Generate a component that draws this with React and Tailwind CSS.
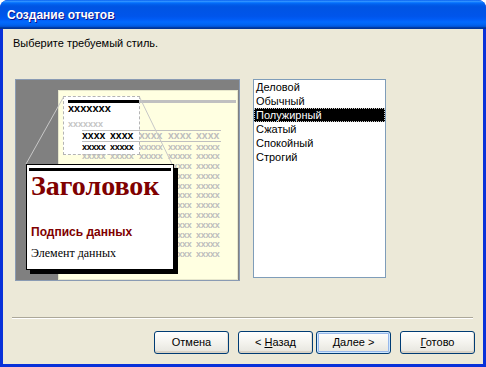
import React from 'react';

const sans = "font-['Liberation_Sans',Arial,sans-serif]";
const serif = "font-['Liberation_Serif','Times_New_Roman',serif]";

const styles = ['Деловой', 'Обычный', 'Полужирный', 'Сжатый', 'Спокойный', 'Строгий'];

// sample table in the page preview: 5 columns of "x" placeholders
const tableCols = 'grid grid-cols-[28px_29px_29px_28px_40px]';

function DataRow({ index }) {
    // rows from the third one on are covered by the magnified card on the left
    const hidden = index >= 2;
    return (
        <div className={`${tableCols} h-[9.8px]`}>
            {[0, 1, 2, 3, 4].map((i) => (
                <span
                    key={i}
                    className={`${hidden && i < 3 ? 'invisible' : ''} ${index === 0 && i < 2 ? 'text-black' : 'text-[#bdbdbd]'}`}
                >
                    {hidden && i < 3 ? '' : 'xxxxx'}
                </span>
            ))}
        </div>
    );
}

function Preview() {
    const rows = Array.from({ length: 12 }, (_, i) => i);
    return (
        <div className={`relative w-[225px] h-[202px] shrink-0 bg-[#808080] border border-[#8a9bb3] overflow-hidden ${sans}`}>
            {/* page */}
            <div className="absolute left-[42px] top-[10px] w-[180px] h-[190px] bg-[#ffffe1] border border-[#e6e6cc]" />

            {/* zoomed region of the page */}
            <div className="absolute left-[47px] top-[16px] w-[77px] h-[59px] bg-white border border-dashed border-[#b4b4b4]" />
            <div className="absolute left-[52px] top-[20px] flex flex-col">
                <div className="flex">
                    <div className="w-[71px] h-[3px] bg-black" />
                    <div className="w-[97px] h-[3px] bg-[#c0c0c0]" />
                </div>
                <div className="text-[11px] leading-[11px] font-bold text-black">xxxxxxx</div>
                <div className="mt-[6px] text-[9px] leading-[9px] font-bold text-[#c4c4c4]">xxxxxxx</div>
            </div>

            {/* table: header and rows */}
            <div className="absolute left-[66px] top-[50px] flex flex-col font-bold">
                <div className="w-[139px] h-px bg-[#c0c0c0] -mb-px" />
                <div className={`${tableCols} h-[11px] text-[10.5px] leading-[11px]`}>
                    <span className="text-black">xxxx</span>
                    <span className="text-black">xxxx</span>
                    <span className="text-[#bdbdbd]">xxxx</span>
                    <span className="text-[#bdbdbd]">xxxx</span>
                    <span className="text-[#bdbdbd]">xxxx</span>
                </div>
                <div className="w-[139px] h-px bg-[#c0c0c0]" />
                <div className="flex flex-col -mt-[0.5px] text-[9px] leading-[10px] tracking-[-0.3px]">
                    {rows.map((i) => (
                        <DataRow key={i} index={i} />
                    ))}
                </div>
            </div>

            {/* zoom lines */}
            <svg className="absolute left-0 top-0 pointer-events-none" width="225" height="202">
                <line x1="47.5" y1="17" x2="10" y2="84" stroke="#c8c8c8" strokeWidth="1" />
                <line x1="123.5" y1="17" x2="156" y2="84" stroke="#c8c8c8" strokeWidth="1" />
            </svg>

            {/* magnified card */}
            <div className="absolute left-[10px] top-[84px] w-[148px] h-[106px] flex flex-col pl-[2px] pt-[3px] bg-white border border-black shadow-[4px_4px_0_#000]">
                <div className="w-[142px] h-[3px] bg-black" />
                <div className={`mt-[1px] ml-[2px] text-[28px] leading-[28px] font-bold text-[#800000] ${serif}`}>
                    Заголовок
                </div>
                <div className="mt-[26px] ml-[2px] text-[12px] leading-[12px] font-bold text-[#800000]">
                    Подпись данных
                </div>
                <div className={`mt-[9px] ml-[2px] text-[12px] leading-[12px] text-black ${serif}`}>
                    Элемент данных
                </div>
            </div>
        </div>
    );
}

function XpButton({ children, primary }) {
    return (
        <button
            className={`w-[75px] h-[23px] rounded-[3px] border border-[#003c74] bg-linear-to-b from-white via-[#f4f3ee] to-[#e6e5de] text-[11px] font-normal text-black ${
                primary
                    ? 'shadow-[inset_0_0_0_1px_#cee7ff,inset_0_0_0_2px_#98b8ea]'
                    : 'shadow-[inset_0_-2px_0_#d8d2c6,inset_-1px_0_0_#e2ded4]'
            }`}
        >
            {children}
        </button>
    );
}

export default function App() {
    return (
        <div className={`w-[486px] h-[367px] bg-white ${sans}`}>
            <div className="w-full h-full flex flex-col rounded-t-[8px] overflow-hidden bg-[#0831d9]">
                {/* Title bar */}
                <div className="h-[29px] shrink-0 flex items-center pl-[7px] bg-[linear-gradient(to_bottom,#0058ee_0%,#3593ff_4%,#288eff_6%,#127dff_8%,#036ffc_10%,#0262ee_14%,#0057e5_20%,#0054e3_24%,#0055eb_56%,#005bf5_66%,#026afe_76%,#0062ef_86%,#0052d6_92%,#0040ab_94%,#003092_100%)]">
                    <span className="text-[12px] font-bold text-white [text-shadow:1px_1px_#0f1089] pt-[1px]">
                        Создание отчетов
                    </span>
                </div>

                {/* Body */}
                <div className="flex-1 flex flex-col mx-[3px] mb-[3px] bg-[#ece9d8]">
                    <p className="pt-[8px] pl-[10px] text-[11px] leading-[13px] text-black">
                        Выберите требуемый стиль.
                    </p>

                    <div className="flex items-start gap-[13px] mt-[29px] pl-[12px]">
                        <Preview />

                        <ul className="w-[133px] h-[199px] bg-white border border-[#7f9db9] text-[11px] leading-[14px]">
                            {styles.map((s) => (
                                <li
                                    key={s}
                                    className={`h-[14px] pl-[2px] ${
                                        s === 'Полужирный'
                                            ? 'bg-black text-white outline-1 outline-dotted outline-[#c8c8c8] -outline-offset-1'
                                            : 'text-black'
                                    }`}
                                >
                                    {s}
                                </li>
                            ))}
                        </ul>
                    </div>

                    {/* Separator */}
                    <div className="mt-[36px] ml-[9px] mr-[10px] h-[2px] border-t border-[#aca899] border-b border-b-white" />

                    {/* Buttons */}
                    <div className="flex justify-end items-center mt-[12px] pr-[8px]">
                        <XpButton>Отмена</XpButton>
                        <div className="flex gap-[3px] ml-[9px] mr-[9px]">
                            <XpButton>
                                &lt; <span className="underline">Н</span>азад
                            </XpButton>
                            <XpButton primary>
                                <span className="underline">Д</span>алее &gt;
                            </XpButton>
                        </div>
                        <XpButton>
                            <span className="underline">Г</span>отово
                        </XpButton>
                    </div>
                </div>
            </div>
        </div>
    );
}
